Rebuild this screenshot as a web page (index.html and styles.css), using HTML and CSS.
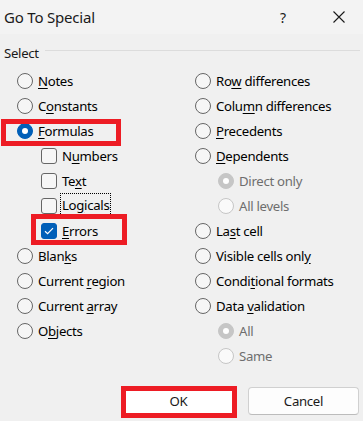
FILE: index.html
```html
<!DOCTYPE html>
<html>
<head>
<meta charset="utf-8">
<link rel="stylesheet" href="styles.css">
</head>
<body>
<div class="dialog">
  <div class="titlebar">
    <span class="title">Go To Special</span>
    <span class="help">?</span>
    <span class="close"><svg width="12" height="12" viewBox="0 0 12 12"><path d="M0.5 0.5 L11.5 11.5 M11.5 0.5 L0.5 11.5" stroke="#1a1a1a" stroke-width="1.1" fill="none"/></svg></span>
  </div>
  <div class="content">
    <div class="grouphead"><span class="gtext">Select</span><span class="rule"></span></div>
    <div class="cols">
      <div class="col left">
        <div class="row"><span class="radio"></span><span class="lbl"><u>N</u>otes</span></div>
        <div class="row"><span class="radio"></span><span class="lbl">C<u>o</u>nstants</span></div>
        <div class="row"><span class="radio on"></span><span class="lbl"><u>F</u>ormulas</span><span class="mark mark-formulas"></span></div>
        <div class="row sub"><span class="check"></span><span class="lbl">N<u>u</u>mbers</span></div>
        <div class="row sub"><span class="check"></span><span class="lbl">Te<u>x</u>t</span></div>
        <div class="row sub"><span class="check"></span><span class="lbl focus">Lo<u>g</u>icals</span></div>
        <div class="row sub"><span class="check on"><svg width="10" height="8" viewBox="0 0 10 8"><path d="M1 4.2 L3.6 6.6 L9 1.2" stroke="#fff" stroke-width="1.2" fill="none"/></svg></span><span class="lbl"><u>E</u>rrors</span><span class="mark mark-errors"></span></div>
        <div class="row"><span class="radio"></span><span class="lbl">Blan<u>k</u>s</span></div>
        <div class="row"><span class="radio"></span><span class="lbl">Current <u>r</u>egion</span></div>
        <div class="row"><span class="radio"></span><span class="lbl">Current <u>a</u>rray</span></div>
        <div class="row"><span class="radio"></span><span class="lbl">O<u>b</u>jects</span></div>
      </div>
      <div class="col right">
        <div class="row"><span class="radio"></span><span class="lbl">Ro<u>w</u> differences</span></div>
        <div class="row"><span class="radio"></span><span class="lbl">Colu<u>m</u>n differences</span></div>
        <div class="row"><span class="radio"></span><span class="lbl"><u>P</u>recedents</span></div>
        <div class="row"><span class="radio"></span><span class="lbl"><u>D</u>ependents</span></div>
        <div class="row sub"><span class="radio dis on"></span><span class="lbl dim">Direct only</span></div>
        <div class="row sub"><span class="radio dis"></span><span class="lbl dim">All levels</span></div>
        <div class="row"><span class="radio"></span><span class="lbl">La<u>s</u>t cell</span></div>
        <div class="row"><span class="radio"></span><span class="lbl">Visible cells onl<u>y</u></span></div>
        <div class="row"><span class="radio"></span><span class="lbl">Condi<u>t</u>ional formats</span></div>
        <div class="row"><span class="radio"></span><span class="lbl">Data <u>v</u>alidation</span></div>
        <div class="row sub"><span class="radio dis on"></span><span class="lbl dim">All</span></div>
        <div class="row sub"><span class="radio dis"></span><span class="lbl dim">Same</span></div>
      </div>
    </div>
    <div class="buttons">
      <div class="btn ok">OK<span class="mark mark-ok"></span></div>
      <div class="btn">Cancel</div>
    </div>
  </div>
</div>
</body>
</html>
```
FILE: styles.css
```css
html, body {
  margin: 0;
  padding: 0;
}
body {
  width: 363px;
  height: 421px;
  background: #f0f0f0;
  font-family: "Noto Sans", "Open Sans", sans-serif;
  font-size: 13.2px;
  letter-spacing: -0.3px;
  color: #000;
  overflow: hidden;
}
.dialog {
  display: flex;
  flex-direction: column;
  height: 421px;
}
.titlebar {
  height: 34px;
  background: #f3f3f3;
  display: flex;
  align-items: center;
  position: relative;
}
.title {
  margin-left: 4px;
  font-size: 15px;
  letter-spacing: -0.2px;
  color: #1a1a1a;
  flex: 1;
}
.help {
  font-size: 14px;
  color: #1a1a1a;
  width: 14px;
  margin-right: 43px;
  text-align: center;
}
.close {
  display: flex;
  margin-right: 18px;
}
.content {
  flex: 1;
  display: flex;
  flex-direction: column;
}
.grouphead {
  display: flex;
  align-items: center;
  height: 20px;
  margin-top: 9px;
  padding-left: 4px;
  padding-right: 3px;
}
.gtext {
  color: #1a1a1a;
}
.rule {
  flex: 1;
  height: 1px;
  background: #dcdcdc;
  margin-left: 6px;
  margin-top: -5px;
}
.cols {
  display: flex;
  margin-top: 5px;
}
.col {
  display: flex;
  flex-direction: column;
}
.left {
  width: 179px;
  padding-left: 17px;
  box-sizing: border-box;
}
.right {
  padding-left: 16px;
}
.row {
  height: 25px;
  display: flex;
  align-items: center;
  position: relative;
}
.left .row.sub {
  padding-left: 24px;
}
.right .row.sub {
  padding-left: 23px;
}
.radio {
  width: 16px;
  height: 16px;
  box-sizing: border-box;
  border-radius: 50%;
  border: 1px solid #666;
  background: #f6f6f6;
  flex: none;
  position: relative;
}
.radio.on {
  background: #005fb8;
  border-color: #005fb8;
}
.radio.on::after {
  content: "";
  position: absolute;
  left: 4px;
  top: 4px;
  width: 6px;
  height: 6px;
  border-radius: 50%;
  background: #fff;
}
.radio.dis {
  border-color: #c6c6c6;
  background: #fafafa;
}
.radio.dis.on {
  background: #c6c6c6;
}
.check {
  width: 16px;
  height: 16px;
  box-sizing: border-box;
  border-radius: 3px;
  border: 1px solid #666;
  background: #f6f6f6;
  flex: none;
  display: flex;
  align-items: center;
  justify-content: center;
}
.check.on {
  background: #005fb8;
  border-color: #005fb8;
}
.lbl {
  margin-left: 5px;
  white-space: nowrap;
}
.lbl u {
  text-underline-offset: 2px;
}
.dim {
  color: #6e6e6e;
}
.focus {
  outline: 1px dotted #000;
  outline-offset: 0px;
  padding: 2px 1px 3px 1px;
  margin-left: 4px;
}
.mark {
  position: absolute;
  border: 5px solid #ed1c24;
  box-sizing: border-box;
  pointer-events: none;
}
.mark-formulas {
  left: -16px;
  top: 1px;
  width: 120px;
  height: 27px;
}
.mark-errors {
  left: 14px;
  top: -4px;
  width: 96px;
  height: 31px;
}
.buttons {
  display: flex;
  justify-content: flex-end;
  gap: 14px;
  margin-top: auto;
  margin-bottom: 6px;
  padding-right: 4px;
}
.btn {
  width: 111px;
  height: 28px;
  box-sizing: border-box;
  background: #fdfdfd;
  border: 1px solid #d0d0d0;
  border-bottom-color: #bcbcbc;
  border-radius: 4px;
  display: flex;
  align-items: center;
  justify-content: center;
  position: relative;
  color: #1a1a1a;
}
.btn.ok {
  background: #fff;
}
.mark-ok {
  left: -3px;
  top: -2px;
  width: 116px;
  height: 32px;
}
```
